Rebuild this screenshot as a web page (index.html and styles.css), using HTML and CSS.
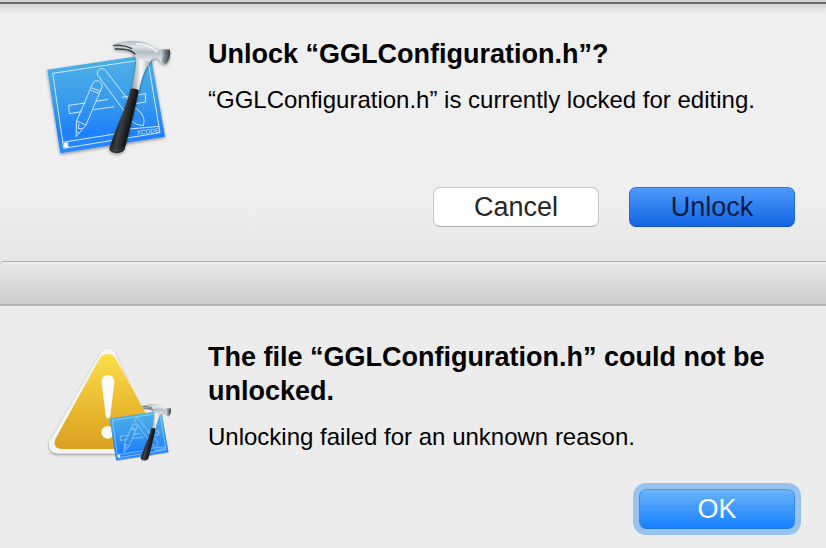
FILE: index.html
```
<!DOCTYPE html>
<html lang="en">
<head>
<meta charset="utf-8">
<title>Unlock file</title>
<link rel="stylesheet" href="styles.css">
</head>
<body>
<svg class="defs" aria-hidden="true">
  <defs>
    <linearGradient id="plate" x1="0" y1="0" x2="0" y2="1">
      <stop offset="0" stop-color="#4fb3e4"/><stop offset=".45" stop-color="#3a9cec"/><stop offset=".8" stop-color="#1f80fb"/><stop offset="1" stop-color="#2e8bfa"/>
    </linearGradient>
    <linearGradient id="steel" x1="0" y1="0" x2="0" y2="1">
      <stop offset="0" stop-color="#aeb8be"/><stop offset=".25" stop-color="#dde4e8"/><stop offset=".5" stop-color="#b4bec5"/><stop offset="1" stop-color="#eef2f4"/>
    </linearGradient>
    <linearGradient id="neck" x1="0" y1="0" x2="1" y2="0">
      <stop offset="0" stop-color="#8b959b"/><stop offset=".45" stop-color="#f8fafb"/><stop offset="1" stop-color="#929da4"/>
    </linearGradient>
    <linearGradient id="face" x1="0" y1="0" x2="1" y2="0">
      <stop offset="0" stop-color="#b9d3df"/><stop offset=".5" stop-color="#6c777d"/><stop offset="1" stop-color="#353b3f"/>
    </linearGradient>
    <linearGradient id="grip" gradientUnits="userSpaceOnUse" x1="240" y1="270" x2="282" y2="280">
      <stop offset="0" stop-color="#191b1c"/><stop offset=".4" stop-color="#3c4042"/><stop offset="1" stop-color="#131415"/>
    </linearGradient>
    <linearGradient id="gold" x1="0" y1="0" x2="0" y2="1">
      <stop offset="0" stop-color="#fbdf4b"/><stop offset=".5" stop-color="#ebbd32"/><stop offset="1" stop-color="#daa11f"/>
    </linearGradient>
    <filter id="shade" x="-20%" y="-20%" width="140%" height="150%">
      <feDropShadow dx="0" dy="4" stdDeviation="4" flood-color="#000" flood-opacity=".4"/>
    </filter>
    <g id="xcode">
      <path d="M34 119 344 73 387 320 73 370Z" fill="url(#plate)" filter="url(#shade)"/>
      <g fill="none" stroke="#c9e9ff" stroke-width="3" stroke-linejoin="round">
        <path d="M50 130 335 87 372 308 83 355Z"/>
        <path d="M79 337 275 306 280 297 370 289"/>
        <path d="M98 226 148 219M180 214 217 208M258 202 328 191 329 216 282 223M235 230 173 239M137 245 100 251"/>
        <path d="M98 226 100 251"/>
        <path d="M185 135C179 120 200 108 209 122L293 230M185 135 262 239"/>
        <path d="M293 230 289 244 262 239C277 270 295 285 322 287 329 263 318 246 293 230"/>
        <path d="M169 163C174 145 201 151 198 171L150 285 120 320 122 273ZM167 174 192 183M164 181 189 190M122 273 150 285M129 281 127 296 139 295M122 305 129 310"/>
      </g>
      <text class="plate-label" x="303" y="315" transform="rotate(-7 303 315)">XCODE</text>
      <path d="M84 344C82 337 87 338 90 339 94 336 98 339 97 342 95 346 98 349 98 350 94 355 91 353 88 353 84 353 83 348 84 344ZM90 337 95 333 93 338Z" fill="#fff"/>
      <g filter="url(#shade)">
        <path d="M300 80C303 115 291 148 286 180L308 182C316 148 324 121 340 99L350 84Z" fill="url(#neck)"/>
        <path d="M284 178C286 173 308 176 308 183 296 244 281 298 266 357 260 373 222 373 220 356 239 296 269 237 284 178Z" fill="url(#grip)"/>
        <path d="M221 349C226 363 254 368 266 351" fill="none" stroke="#55595b" stroke-width="2"/>
        <path d="M231 43C259 33 288 31 317 35 336 38 351 48 365 60L378 57 398 59C404 70 402 87 391 100L376 98 367 86C358 81 348 85 341 96 330 89 312 89 300 87 297 74 290 66 277 61L236 58 233 54 277 53C263 46 248 48 231 49Z" fill="url(#steel)"/>
        <path d="M232 47C252 43 270 47 288 56M236 57C258 57 283 55 298 73" fill="none" stroke="#33393c" stroke-width="4"/>
        <path d="M377 57Q389 60 401 58 407 80 392 101 381 103 374 95 384 76 377 57Z" fill="url(#face)"/>
        <path d="M300 42C325 38 344 52 365 66" fill="none" stroke="#f2f6f8" stroke-width="5"/>
      </g>
    </g>
  </defs>
</svg>

<main class="screen">
  <section class="dialog dialog-first" role="dialog" aria-labelledby="t1">
    <svg class="icon" viewBox="24 12 384 384" role="img" aria-label="Xcode"><use href="#xcode"/></svg>
    <div class="content">
      <h1 id="t1">Unlock “GGLConfiguration.h”?</h1>
      <p>“GGLConfiguration.h” is currently locked for editing.</p>
      <div class="actions">
        <button type="button" class="button">Cancel</button>
        <button type="button" class="button button-pressed">Unlock</button>
      </div>
    </div>
  </section>

  <div class="titlebar"></div>

  <section class="dialog dialog-second" role="dialog" aria-labelledby="t2">
    <svg class="icon" viewBox="24 15 384 384" role="img" aria-label="Warning">
      <path d="M216 65 333 331H63Z" fill="#f5f5f4" stroke="#f5f5f4" stroke-width="48" stroke-linejoin="round" filter="url(#shade)"/>
      <path d="M190 72C201 52 230 52 240 72L370 310C382 330 370 342 350 342H80C55 342 50 326 61 307Z" fill="url(#gold)"/>
      <path d="M197 141C195 113 237 113 235 141L223 242C221 253 211 253 209 242Z" fill="#fafafa"/>
      <circle cx="215" cy="292" r="19" fill="#fafafa"/>
      <use href="#xcode" transform="translate(204 191) scale(.5)"/>
    </svg>
    <div class="content">
      <h1 id="t2">The file “GGLConfiguration.h” could not be unlocked.</h1>
      <p>Unlocking failed for an unknown reason.</p>
      <div class="actions">
        <button type="button" class="button button-default">OK</button>
      </div>
    </div>
  </section>
</main>
</body>
</html>
```
FILE: styles.css
```
* {
  box-sizing: border-box;
}

body {
  margin: 0;
  background: #ececec;
  color: #000;
  font-family: "Liberation Sans", Arial, sans-serif;
}

.defs {
  position: absolute;
  width: 0;
  height: 0;
}

.screen {
  display: flex;
  flex-direction: column;
  min-height: 100vh;
  border-top: 2px solid #d2d2d2;
}

.dialog {
  display: flex;
  align-items: flex-start;
  gap: 36px;
  padding: 30px 31px 34px 44px;
}

.dialog-first {
  border-top: 2px solid #666769;
  background: linear-gradient(#d2d2d2, #e6e6e6 5px, #efefef 10px, #efefef 190px, #e6e6e6);
}

.dialog-first .content {
  padding-top: 3px;
}

.dialog-second {
  flex: 1;
  padding-top: 34px;
  padding-bottom: 18px;
}

.icon {
  flex: none;
  width: 128px;
  height: 128px;
}

.plate-label {
  fill: #d5efff;
  font-size: 19px;
}

.content {
  flex: 1;
  min-width: 0;
}

h1 {
  margin: 0;
  font-size: 27px;
  line-height: 34px;
}

p {
  margin: 14px 0 0;
  font-size: 24px;
  line-height: 30px;
}

.actions {
  display: flex;
  justify-content: flex-end;
  gap: 30px;
  margin-top: 72px;
}

.button {
  width: 166px;
  height: 40px;
  padding: 0;
  border: 1px solid #c6c6c6;
  border-bottom-color: #aeaeae;
  border-radius: 7px;
  background: #fff;
  color: #262626;
  font: 27px/38px "Liberation Sans", Arial, sans-serif;
}

.button-pressed {
  border-color: #2f79e6 #2068d8 #0d50c0;
  background: linear-gradient(#4f9bff, #1163e0);
  color: #071c46;
}

.button-default {
  width: 156px;
  border-color: #4b98ea #3389ee #1b77ea;
  background: linear-gradient(#6cb3fa, #1680ff);
  box-shadow: 0 0 0 6px #98c3ee;
  color: #fff;
}

.dialog-second .actions {
  margin-top: 37px;
}

.titlebar {
  height: 45px;
  border-top: 1px solid #b0b0b0;
  border-bottom: 2px solid #b2b2b2;
  border-top-left-radius: 4px;
  background: linear-gradient(#f2f2f2, #e6e6e6 3px, #cdcdcd);
}
```
